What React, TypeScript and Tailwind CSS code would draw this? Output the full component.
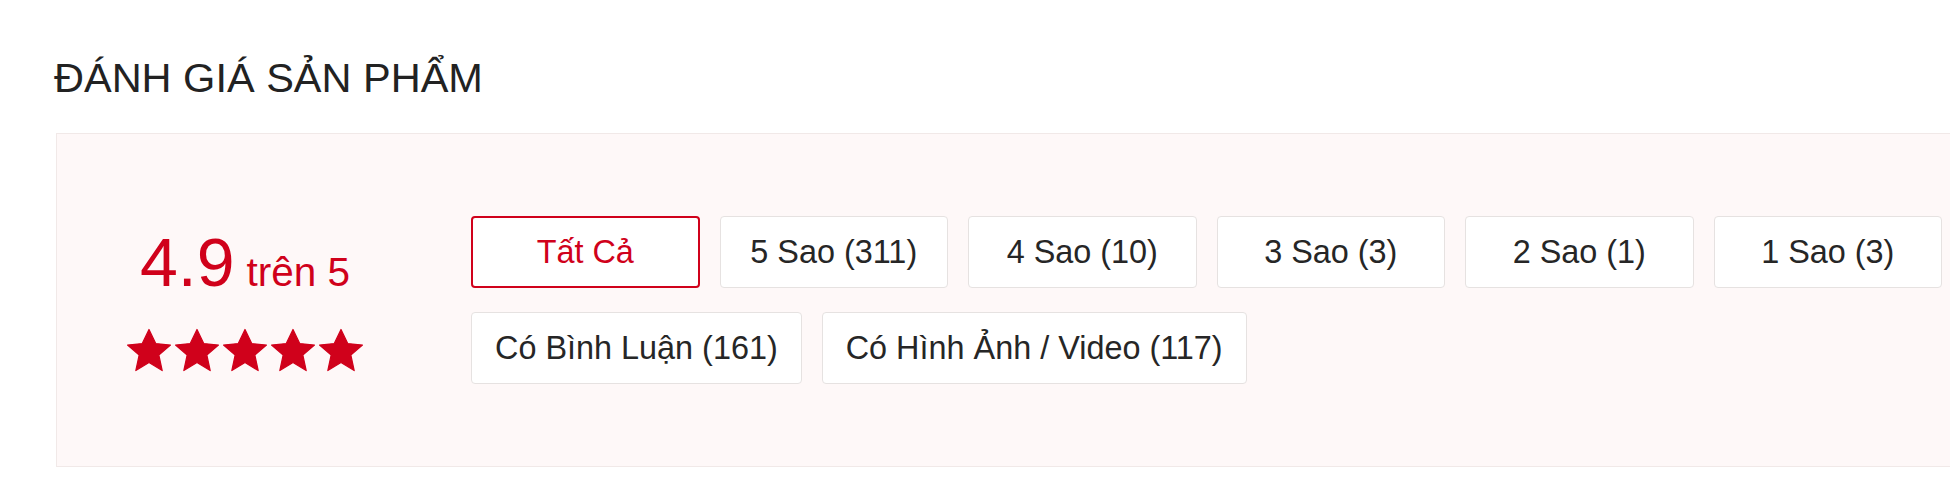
import React from "react";

const RED = "#d0011b";

function Star() {
  return (
    <svg viewBox="0 0 15 15" className="w-[46px] h-[46px] shrink-0" aria-hidden="true">
      <polygon
        points="7.5 .8 9.7 5.4 14.5 5.9 10.7 9.1 11.8 14.2 7.5 11.6 3.2 14.2 4.3 9.1 .5 5.9 5.3 5.4"
        fill={RED}
        stroke={RED}
        strokeWidth="0.4"
        strokeLinejoin="round"
      />
    </svg>
  );
}

const filters = [
  { label: "Tất Cả", active: true },
  { label: "5 Sao (311)" },
  { label: "4 Sao (10)" },
  { label: "3 Sao (3)" },
  { label: "2 Sao (1)" },
  { label: "1 Sao (3)" },
  { label: "Có Bình Luận (161)" },
  { label: "Có Hình Ảnh / Video (117)" },
];

export default function App() {
  return (
    <div
      className="w-full h-[500px] overflow-hidden bg-white pl-[54px] pt-[54px]"
      style={{ fontFamily: '"Liberation Sans", Arial, Helvetica, sans-serif' }}
    >
      <h2 className="text-[41.5px] leading-[48px] text-[#222222] font-normal">ĐÁNH GIÁ SẢN PHẨM</h2>
      <div className="mt-[31px] ml-[2px] w-[2300px] h-[334px] border border-[#f1e9e8] bg-[#fef8f8] flex items-center pl-[69px]">
        <div className="w-[238px] shrink-0 flex flex-col items-center">
          <div className="flex items-baseline text-[#d0011b] whitespace-nowrap">
            <span className="text-[68px] leading-none">4.9</span>
            <span className="text-[40.5px] leading-none ml-[12px]">trên 5</span>
          </div>
          <div className="flex gap-[2px] mt-[31px]">
            <Star />
            <Star />
            <Star />
            <Star />
            <Star />
          </div>
        </div>
        <div className="ml-[107px] w-[1560px] flex flex-wrap">
          {filters.map((f) =>
            f.active ? (
              <div
                key={f.label}
                className="h-[72px] min-w-[228.5px] px-[23px] my-[12px] mr-[20px] flex items-center justify-center bg-white border-2 border-[#d0011b] rounded-[4px] text-[32.4px] text-[#d0011b] whitespace-nowrap"
              >
                {f.label}
              </div>
            ) : (
              <div
                key={f.label}
                className="h-[72px] min-w-[228.5px] px-[23px] my-[12px] mr-[20px] flex items-center justify-center bg-white border border-[#e6e2e1] rounded-[4px] text-[32.4px] text-[#262626] whitespace-nowrap"
              >
                {f.label}
              </div>
            )
          )}
        </div>
      </div>
    </div>
  );
}
